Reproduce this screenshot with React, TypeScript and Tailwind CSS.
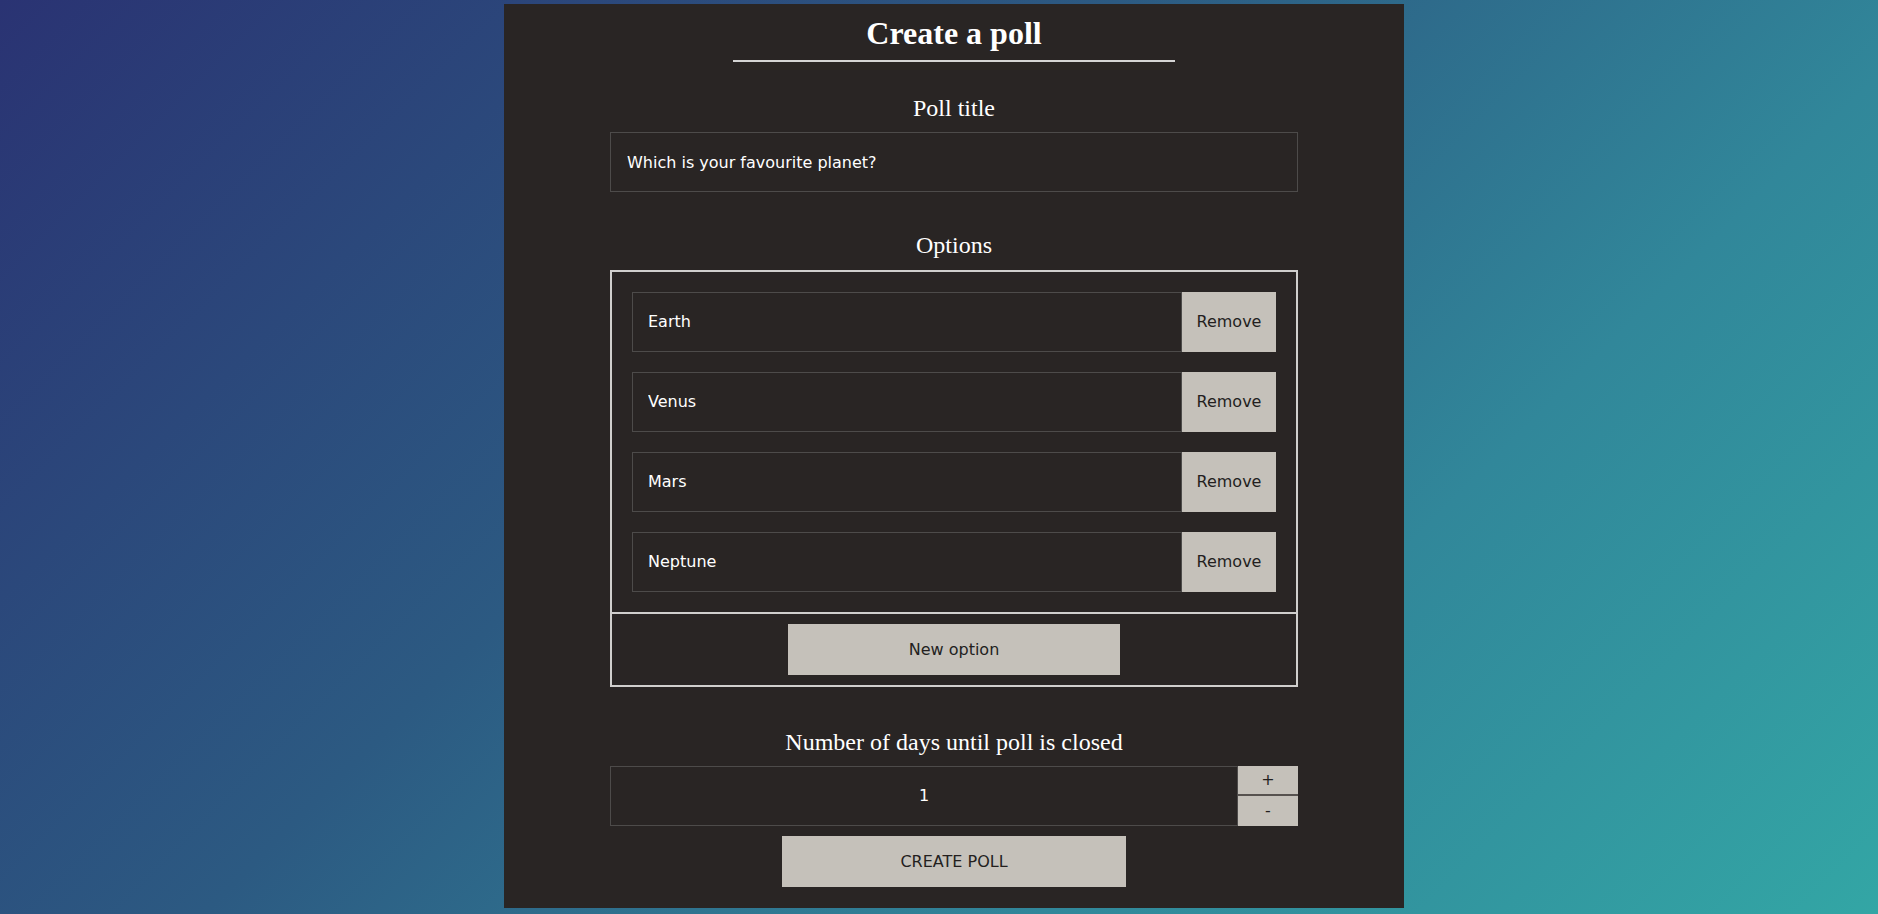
import { useState } from 'react';

const SANS = 'font-["DejaVu_Sans",Verdana,sans-serif]';
const SERIF = 'font-["Liberation_Serif","Times_New_Roman",serif]';

const INITIAL_OPTIONS = ['Earth', 'Venus', 'Mars', 'Neptune'];

export default function App() {
  const [title, setTitle] = useState('Which is your favourite planet?');
  const [options, setOptions] = useState(INITIAL_OPTIONS);
  const [days, setDays] = useState(1);

  function updateOption(idx: number, value: string) {
    setOptions((prev) => prev.map((o, i) => (i === idx ? value : o)));
  }

  return (
    <div className="min-h-screen w-full bg-[linear-gradient(135deg,#2a3373_0%,#2c5a82_40%,#31879a_70%,#33a6a5_100%)] flex justify-center pl-[30px] pt-[4px] pb-[6px]">
      <div className={`w-[900px] bg-[#292524] flex flex-col items-center pt-[11px] pb-[20px] ${SERIF}`}>
        {/* Heading */}
        <h1 className="w-[442px] text-center text-[32px] leading-[37px] font-bold text-white border-b-2 border-[#d4d4d4] pb-[8px]">
          Create a poll
        </h1>

        <div className="w-[688px] flex flex-col">
          {/* Title */}
          <label className="mt-[32px] text-center text-[24px] leading-[28px] text-white">Poll title</label>
          <input
            value={title}
            onChange={(e) => setTitle(e.target.value)}
            className={`mt-[10px] h-[60px] w-full bg-[#292524] border border-[#4d4b4a] px-[16px] text-[16px] text-white outline-none ${SANS}`}
          />

          {/* Options */}
          <label className="mt-[39px] text-center text-[24px] leading-[28px] text-white">Options</label>
          <div className="mt-[11px] border-2 border-[#d0cfcd]">
            <div className="flex flex-col gap-[20px] p-[20px]">
              {options.map((opt, i) => (
                <div key={i} className="flex h-[60px]">
                  <input
                    value={opt}
                    onChange={(e) => updateOption(i, e.target.value)}
                    className={`flex-1 min-w-0 bg-[#292524] border border-[#4d4b4a] px-[15px] text-[16px] text-white outline-none ${SANS}`}
                  />
                  <button
                    onClick={() => setOptions((prev) => prev.filter((_, j) => j !== i))}
                    className={`w-[94px] bg-[#c5c1ba] text-[16px] text-[#231f1e] ${SANS}`}
                  >
                    Remove
                  </button>
                </div>
              ))}
            </div>
            <div className="border-t-2 border-[#d0cfcd] flex justify-center py-[10px]">
              <button
                onClick={() => setOptions((prev) => [...prev, ''])}
                className={`w-[332px] h-[51px] bg-[#c5c1ba] text-[16px] text-[#231f1e] ${SANS}`}
              >
                New option
              </button>
            </div>
          </div>

          {/* Days */}
          <label className="mt-[41px] text-center text-[24px] leading-[28px] text-white">
            Number of days until poll is closed
          </label>
          <div className="mt-[10px] flex h-[60px]">
            <input
              value={days}
              onChange={(e) => setDays(Number(e.target.value) || 0)}
              className={`flex-1 min-w-0 bg-[#292524] border border-[#4d4b4a] text-center text-[16px] text-white outline-none ${SANS}`}
            />
            <div className="w-[60px] flex flex-col">
              <button
                onClick={() => setDays((d) => d + 1)}
                className={`h-[30px] bg-[#c5c1ba] border-b-2 border-[#57524f] text-[16px] text-[#231f1e] ${SANS}`}
              >
                +
              </button>
              <button
                onClick={() => setDays((d) => Math.max(1, d - 1))}
                className={`flex-1 bg-[#c5c1ba] text-[16px] text-[#231f1e] ${SANS}`}
              >
                -
              </button>
            </div>
          </div>

          <div className="mt-[10px] flex justify-center">
            <button className={`w-[344px] h-[51px] bg-[#c5c1ba] text-[16px] text-[#231f1e] ${SANS}`}>
              CREATE POLL
            </button>
          </div>
        </div>
      </div>
    </div>
  );
}
